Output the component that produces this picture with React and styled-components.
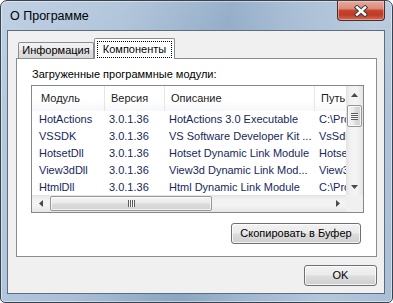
import React from 'react';
import styled, { createGlobalStyle } from 'styled-components';

const modules = [
  { name: 'HotActions', version: '3.0.1.36', desc: 'HotActions 3.0 Executable', path: 'C:\\Program Files\\HotActions\\HotActions.exe' },
  { name: 'VSSDK', version: '3.0.1.36', desc: 'VS Software Developer Kit ...', path: 'VsSdk.dll' },
  { name: 'HotsetDll', version: '3.0.1.36', desc: 'Hotset Dynamic Link Module', path: 'HotsetDll.dll' },
  { name: 'View3dDll', version: '3.0.1.36', desc: 'View3d Dynamic Link Mod...', path: 'View3dDll.dll' },
  { name: 'HtmlDll', version: '3.0.1.36', desc: 'Html Dynamic Link Module', path: 'C:\\Program Files\\HotActions\\HtmlDll.dll' },
];

const columns = [
  { title: 'Модуль', key: 'name', width: 73 },
  { title: 'Версия', key: 'version', width: 60 },
  { title: 'Описание', key: 'desc', width: 150 },
  { title: 'Путь', key: 'path', width: 220 },
];

const Arrow = ({ dir }) => {
  const shapes = {
    up: 'M0 4 L3.5 0 L7 4 Z',
    down: 'M0 0 L7 0 L3.5 4 Z',
    left: 'M4 0 L4 7 L0 3.5 Z',
    right: 'M0 0 L4 3.5 L0 7 Z',
  };
  const vertical = dir === 'up' || dir === 'down';
  return (
    <svg width={vertical ? 7 : 4} height={vertical ? 4 : 7} viewBox={vertical ? '0 0 7 4' : '0 0 4 7'}>
      <path d={shapes[dir]} fill="#4a4a4a" />
    </svg>
  );
};

const CloseIcon = () => (
  <svg width="14" height="12" viewBox="0 0 14 12">
    <path d="M3 2.5 L11 9.5 M11 2.5 L3 9.5" stroke="#3a3f47" strokeWidth="4.4" strokeLinecap="square" />
    <path d="M3 2.5 L11 9.5 M11 2.5 L3 9.5" stroke="#ffffff" strokeWidth="2.4" strokeLinecap="square" />
  </svg>
);

const App = () => {
  return (
    <>
      <GlobalStyle />
      <Window>
        <TitleBar>
          <Title>О Программе</Title>
          <CloseButton aria-label="close">
            <CloseIcon />
          </CloseButton>
        </TitleBar>
        <Client>
          <TabStrip>
            <Tab $width={76}>Информация</Tab>
            <Tab $width={81} $active>
              <FocusLabel>Компоненты</FocusLabel>
            </Tab>
          </TabStrip>
          <Panel>
            <Caption>Загруженные программные модули:</Caption>
            <ListView>
              <ListContent>
                <HeaderRow>
                  {columns.map((c) => (
                    <HeaderCell key={c.key} $width={c.width}>{c.title}</HeaderCell>
                  ))}
                </HeaderRow>
                <Rows>
                  {modules.map((m) => (
                    <Row key={m.name}>
                      {columns.map((c) => (
                        <Cell key={c.key} $width={c.width}>{m[c.key]}</Cell>
                      ))}
                    </Row>
                  ))}
                </Rows>
              </ListContent>
              <VScroll>
                <ScrollButton><Arrow dir="up" /></ScrollButton>
                <VTrack>
                  <VThumb>
                    <Grip $vertical />
                  </VThumb>
                </VTrack>
                <ScrollButton><Arrow dir="down" /></ScrollButton>
              </VScroll>
              <HScroll>
                <ScrollButton><Arrow dir="left" /></ScrollButton>
                <HTrack>
                  <HThumb>
                    <Grip />
                  </HThumb>
                </HTrack>
                <ScrollButton><Arrow dir="right" /></ScrollButton>
              </HScroll>
              <Corner />
            </ListView>
            <PanelFooter>
              <Button $width={130}>Скопировать в Буфер</Button>
            </PanelFooter>
          </Panel>
          <Footer>
            <Button $width={73}>OK</Button>
          </Footer>
        </Client>
      </Window>
    </>
  );
};

export default App;

const GlobalStyle = createGlobalStyle`
  html, body {
    margin: 0;
    padding: 0;
    background: #ffffff;
  }
  body {
    font-family: "Liberation Sans", Arial, sans-serif;
    font-size: 11px;
    color: #000;
  }
  * {
    box-sizing: border-box;
  }
`;

const Window = styled.div`
  width: 393px;
  height: 303px;
  display: flex;
  flex-direction: column;
  padding: 0 7px 8px 6px;
  border: 1px solid #39424d;
  border-radius: 7px 7px 5px 5px;
  background:
    linear-gradient(180deg, rgba(255, 255, 255, 0.12) 0%, rgba(255, 255, 255, 0) 40%),
    linear-gradient(100deg, #b7cbe0 0%, #a9bfd6 28%, #8aa6c3 52%, #9fb7d0 66%, #b3c7dc 85%, #a9bfd6 100%);
  box-shadow: inset 0 0 0 1px rgba(255, 255, 255, 0.45);
  overflow: hidden;
`;

const TitleBar = styled.div`
  height: 29px;
  display: flex;
  justify-content: space-between;
  align-items: flex-start;
`;

const Title = styled.div`
  padding: 8px 0 0 3px;
  font-size: 12.5px;
  line-height: 15px;
  color: #000;
`;

const CloseButton = styled.div`
  width: 48px;
  height: 20px;
  display: flex;
  align-items: center;
  justify-content: center;
  border: 1px solid #4b2c29;
  border-top: none;
  border-radius: 0 0 4px 4px;
  background: linear-gradient(
    180deg,
    #e7ab9c 0%,
    #dc8a78 40%,
    #c54530 50%,
    #bd3a26 72%,
    #d26c53 100%
  );
  box-shadow: inset 0 0 0 1px rgba(255, 220, 210, 0.45);
`;

const Client = styled.div`
  flex: 1;
  display: flex;
  flex-direction: column;
  padding: 7px 7px 0 8px;
  border: 1px solid #5f6c7a;
  background: #f0f0f0;
`;

const TabStrip = styled.div`
  height: 20px;
  display: flex;
  align-items: flex-end;
  padding-left: 2px;
  position: relative;
  z-index: 1;
`;

const Tab = styled.div`
  width: ${(p) => p.$width}px;
  height: ${(p) => (p.$active ? 21 : 16)}px;
  margin-bottom: ${(p) => (p.$active ? -1 : 0)}px;
  display: flex;
  align-items: ${(p) => (p.$active ? 'flex-start' : 'center')};
  justify-content: center;
  padding-top: ${(p) => (p.$active ? 2 : 0)}px;
  border: 1px solid #898c95;
  border-bottom: none;
  border-radius: 2px 2px 0 0;
  background: ${(p) =>
    p.$active ? '#ffffff' : 'linear-gradient(180deg, #f3f3f3 0%, #ebebeb 45%, #dedede 50%, #d9d9d9 100%)'};
  font-size: 11px;
  line-height: 13px;
  white-space: nowrap;
`;

const FocusLabel = styled.span`
  display: block;
  width: 100%;
  margin: 0 2px;
  padding: 1px 4px;
  border: 1px dotted #000;
  text-align: center;
  line-height: 13px;
`;

const Panel = styled.div`
  height: 199px;
  display: flex;
  flex-direction: column;
  padding: 9px 12px 0 14px;
  border: 1px solid #898c95;
  background: #ffffff;
`;

const Caption = styled.div`
  line-height: 13px;
  margin-bottom: 4px;
  padding-left: 1px;
`;

const ListView = styled.div`
  height: 128px;
  display: grid;
  grid-template-columns: 1fr 17px;
  grid-template-rows: 1fr 17px;
  border: 1px solid #828790;
  background: #ffffff;
`;

const ListContent = styled.div`
  overflow: hidden;
  min-width: 0;
`;

const HeaderRow = styled.div`
  height: 25px;
  display: flex;
  background: linear-gradient(180deg, #ffffff 0%, #ffffff 60%, #f6f7f9 100%);
`;

const HeaderCell = styled.div`
  flex: 0 0 ${(p) => p.$width}px;
  padding: 6px 0 0 6px;
  border-right: 1px solid #e3e6ea;
  white-space: nowrap;
  overflow: hidden;
  color: #1b1b1b;
  line-height: 13px;

  &:first-child {
    padding-left: 9px;
  }
`;

const Rows = styled.div`
  display: flex;
  flex-direction: column;
`;

const Row = styled.div`
  height: 17px;
  display: flex;
  align-items: center;
`;

const Cell = styled.div`
  flex: 0 0 ${(p) => p.$width}px;
  padding-left: 4px;
  white-space: nowrap;
  overflow: hidden;
  color: #17285a;
  line-height: 13px;

  &:first-child {
    padding-left: 7px;
  }
`;

const VScroll = styled.div`
  display: flex;
  flex-direction: column;
  background: linear-gradient(90deg, #e3e3e3 0%, #f1f1f1 25%, #f4f4f4 60%, #e6e6e6 100%);
`;

const HScroll = styled.div`
  display: flex;
  background: linear-gradient(180deg, #e3e3e3 0%, #f1f1f1 25%, #f4f4f4 60%, #e6e6e6 100%);
`;

const Corner = styled.div`
  background: #f0f0f0;
`;

const ScrollButton = styled.div`
  flex: 0 0 17px;
  height: 17px;
  width: 17px;
  display: flex;
  align-items: center;
  justify-content: center;
`;

const VTrack = styled.div`
  flex: 1;
  padding: 2px 1px 0;
`;

const HTrack = styled.div`
  flex: 1;
  display: flex;
  padding: 0 0 0 1px;
`;

const VThumb = styled.div`
  height: 22px;
  display: flex;
  align-items: center;
  justify-content: center;
  border: 1px solid #979797;
  border-radius: 2px;
  background: linear-gradient(90deg, #f4f4f4 0%, #eaeaea 45%, #dadada 55%, #d3d3d3 100%);
  box-shadow: inset 0 0 0 1px rgba(255, 255, 255, 0.7);
`;

const HThumb = styled.div`
  width: 162px;
  height: 15px;
  margin-top: 1px;
  display: flex;
  align-items: center;
  justify-content: center;
  border: 1px solid #979797;
  border-radius: 2px;
  background: linear-gradient(180deg, #f4f4f4 0%, #eaeaea 45%, #dadada 55%, #d3d3d3 100%);
  box-shadow: inset 0 0 0 1px rgba(255, 255, 255, 0.7);
`;

const Grip = styled.div`
  width: ${(p) => (p.$vertical ? 7 : 7)}px;
  height: ${(p) => (p.$vertical ? 7 : 7)}px;
  background: ${(p) =>
    p.$vertical
      ? 'repeating-linear-gradient(180deg, #5c5c5c 0px, #5c5c5c 1px, #f7f7f7 1px, #f7f7f7 2px)'
      : 'repeating-linear-gradient(90deg, #5c5c5c 0px, #5c5c5c 1px, #f7f7f7 1px, #f7f7f7 2px)'};
`;

const PanelFooter = styled.div`
  display: flex;
  justify-content: flex-end;
  margin-top: 10px;
  padding-right: 3px;
`;

const Footer = styled.div`
  display: flex;
  justify-content: flex-end;
  margin-top: 8px;
`;

const Button = styled.div`
  width: ${(p) => p.$width}px;
  height: 21px;
  display: flex;
  align-items: center;
  justify-content: center;
  border: 1px solid #707070;
  border-radius: 3px;
  background: linear-gradient(180deg, #f2f2f2 0%, #ebebeb 48%, #dddddd 52%, #cfcfcf 100%);
  box-shadow: inset 0 0 0 1px rgba(255, 255, 255, 0.75);
  font-size: 11px;
  line-height: 13px;
  color: #000;
  white-space: nowrap;
`;
